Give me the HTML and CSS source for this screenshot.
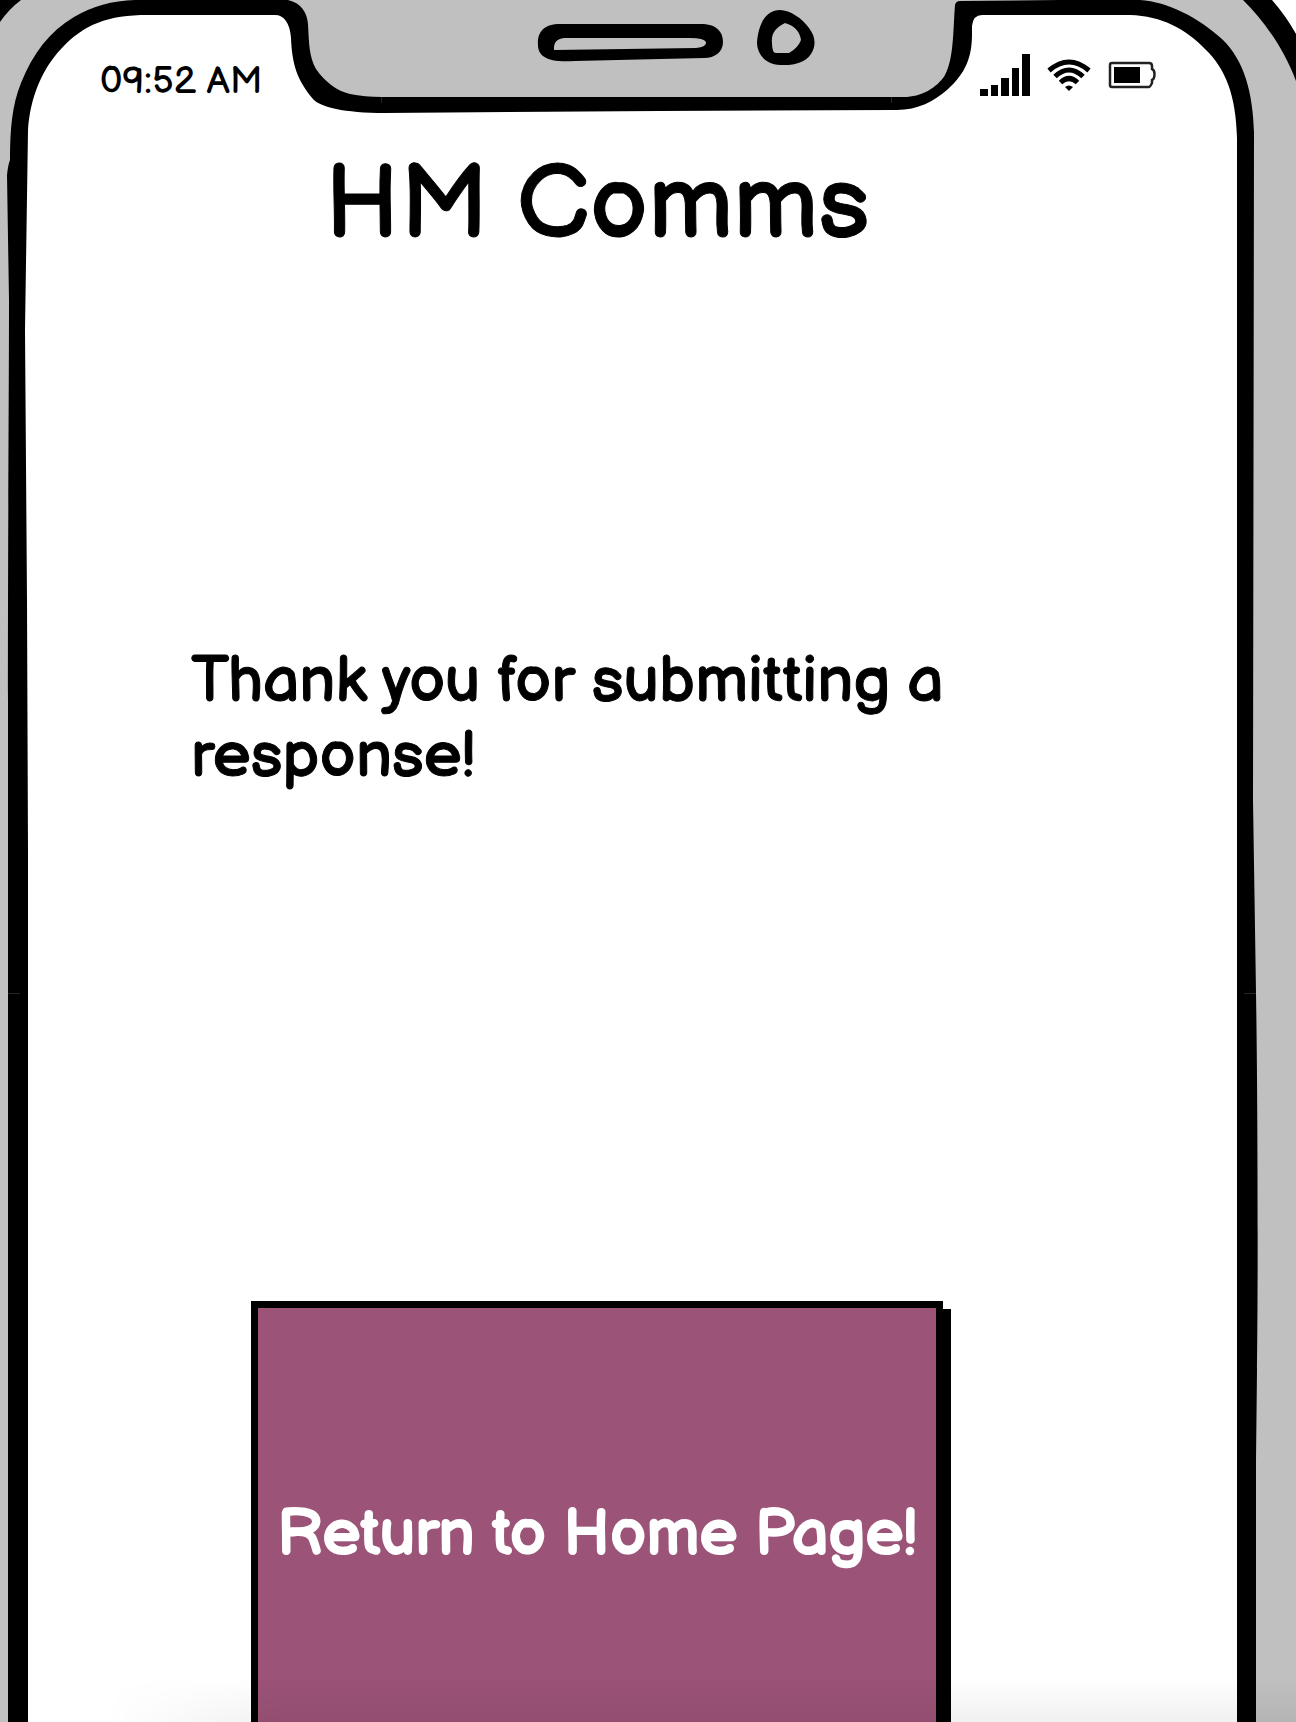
FILE: index.html
```html
<!DOCTYPE html>
<html lang="en">
<head>
  <meta charset="utf-8">
  <meta name="viewport" content="width=device-width, initial-scale=1">
  <title>HM Comms</title>
  <link rel="stylesheet" href="styles.css">
</head>
<body>
  <div class="phone">
    <svg class="phone-frame" viewBox="0 0 1296 1722" preserveAspectRatio="none" aria-hidden="true">
      <rect width="1296" height="1722" fill="#c0c0c0"/>
      <path d="M0 0H21Q9 9 0 22Z"/>
      <path fill="#fff" d="M1270 0H1296V34Q1284 14 1270 0Z"/>
      <path d="M1243 0H1272Q1286 16 1296 34V81C1284 49 1265 22 1243 0Z"/>
      <path d="M135 0H288C301 3 307 12 308 24C309 43 309 57 316 69C325 82 337 91 350 94C360 96 370 97 382 97H904C921 97 937 88 945 75C954 58 953 30 955 5Q956 1 960 1L1060 0H1140C1168 2 1198 17 1223 40C1244 61 1253 92 1254 133L1253 800L1256 993C1258 1110 1258 1300 1257 1370L1256 1460V1722H8V700C8 500 9 400 9 300L7 175Q8 165 10 160C10 130 12 105 21 83C33 53 50 31 74 17Q101 1 135 0Z"/>
      <path fill="#fff" d="M148 15H275C284 15 290 23 291 38C292 64 297 80 313 99C320 107 344 113 385 113L660 111L897 110C918 110 934 101 947 90C966 73 972 57 972 34V26Q973 15 982 15H1130C1162 16 1186 29 1205 49C1226 69 1236 96 1237 138V1722H28V850L27 600L25 330L28 130C30 98 42 69 61 49C84 24 108 15 148 15Z"/>
      <path fill-rule="evenodd" d="M560 24H704C717 25 723 32 723 42C723 52 715 58 704 58L660 59L575 61C547 63 538 56 538 45C537 31 545 24 560 24ZM564 38Q553 39 554 50L696 48Q707 47 706 42Q704 38 690 38Z"/>
      <path fill-rule="evenodd" d="M780 10C790 10 803 19 809 28C816 37 816 46 811 54Q803 66 780 65C765 64 757 54 757 42C759 20 768 10 780 10ZM785 23C775 28 771 34 772 43Q772 53 776 53H789Q798 48 801 40Q799 27 785 23Z"/>
      <path fill="none" stroke="#262626" d="M381.500 97V103M891.500 97V103M8 993.500H20M1244 993.500H1256"/>
    </svg>

    <header class="status-bar">
      <time class="clock" datetime="09:52">09:52 AM</time>
      <div class="indicators">
        <svg class="signal" width="50" height="42" viewBox="0 0 50 42" role="img" aria-label="Signal strength">
          <path d="M0 35H8V42H0ZM11 31H18V42H11ZM21 24H29V42H21ZM32 14H39V42H32ZM42 0H50V42H42Z"/>
        </svg>
        <svg class="wifi" width="44" height="32" viewBox="0 0 44 32" role="img" aria-label="Wi-Fi">
          <path d="M18 28Q22 25 26 28L22 32Z"/>
          <g fill="none" stroke="#000" stroke-width="5">
            <path d="M2 11.500Q22-5.500 42 11.500"/>
            <path d="M8 17.500Q22 4.500 36 17.500"/>
            <path d="M13.500 23.500Q22 15.500 30.500 23.500"/>
          </g>
        </svg>
        <svg class="battery" width="48" height="28" viewBox="0 0 48 28" role="img" aria-label="Battery">
          <path fill="none" stroke="#222" stroke-width="2.500" d="M4 2H41Q44 2 44 5V8Q46.500 9 46.500 13Q46.500 18 44 19V22Q42 26 41 26H4Q2 26 2 24V4Q2 2 4 2Z"/>
          <path d="M6 6H32V22H6Z"/>
        </svg>
      </div>
    </header>

    <main class="screen">
      <h1 class="title">HM Comms</h1>
      <p class="message">Thank you for submitting a response!</p>
      <button class="home-button" type="button">Return to Home Page!</button>
    </main>

    <div class="bottom-shade"></div>
  </div>
</body>
</html>
```
FILE: styles.css
```css
* {
  box-sizing: border-box;
}

body {
  margin: 0;
  background: #c0c0c0;
  color: #000;
  font-family: "Balsamiq Sans", Lato, "Open Sans", sans-serif;
  font-weight: 400;
}

.phone {
  position: relative;
  display: flex;
  flex-direction: column;
  height: 100vh;
  overflow: hidden;
}

.phone-frame {
  position: absolute;
  inset: 0;
  width: 100%;
  height: 100%;
}

.status-bar {
  position: relative;
  display: flex;
  flex: none;
  justify-content: space-between;
  align-items: flex-start;
  padding: 54px 140px 0 100px;
  height: 146px;
}

.clock {
  padding-top: 5px;
  font-size: 38px;
  line-height: 46px;
}

.indicators {
  display: flex;
  align-items: center;
  gap: 17px;
}

.screen {
  position: relative;
  display: flex;
  flex: none;
  flex-direction: column;
  align-items: center;
  padding: 0 102px 0 0;
}

.title {
  margin: 0;
  font-size: 103px;
  font-weight: 400;
  line-height: 120px;
  -webkit-text-stroke: 1px currentColor;
}

.message {
  align-self: stretch;
  margin: 378px 200px 0 191px;
  font-size: 64px;
  line-height: 75px;
  -webkit-text-stroke: 1px currentColor;
}

.home-button {
  width: 692px;
  height: 466px;
  margin-top: 507px;
  padding: 0;
  border: 7px solid #000;
  background: #9b5377;
  box-shadow: 8px 8px 0 #000;
  color: #fff;
  font: inherit;
  font-size: 64px;
  -webkit-text-stroke: 2px currentColor;
}

.bottom-shade {
  position: absolute;
  inset: auto 0 0;
  height: 44px;
  background: linear-gradient(to bottom, transparent, rgba(0, 0, 0, 0.06));
  mask-image: linear-gradient(to right, transparent 8%, #000 22%);
  pointer-events: none;
}
```
